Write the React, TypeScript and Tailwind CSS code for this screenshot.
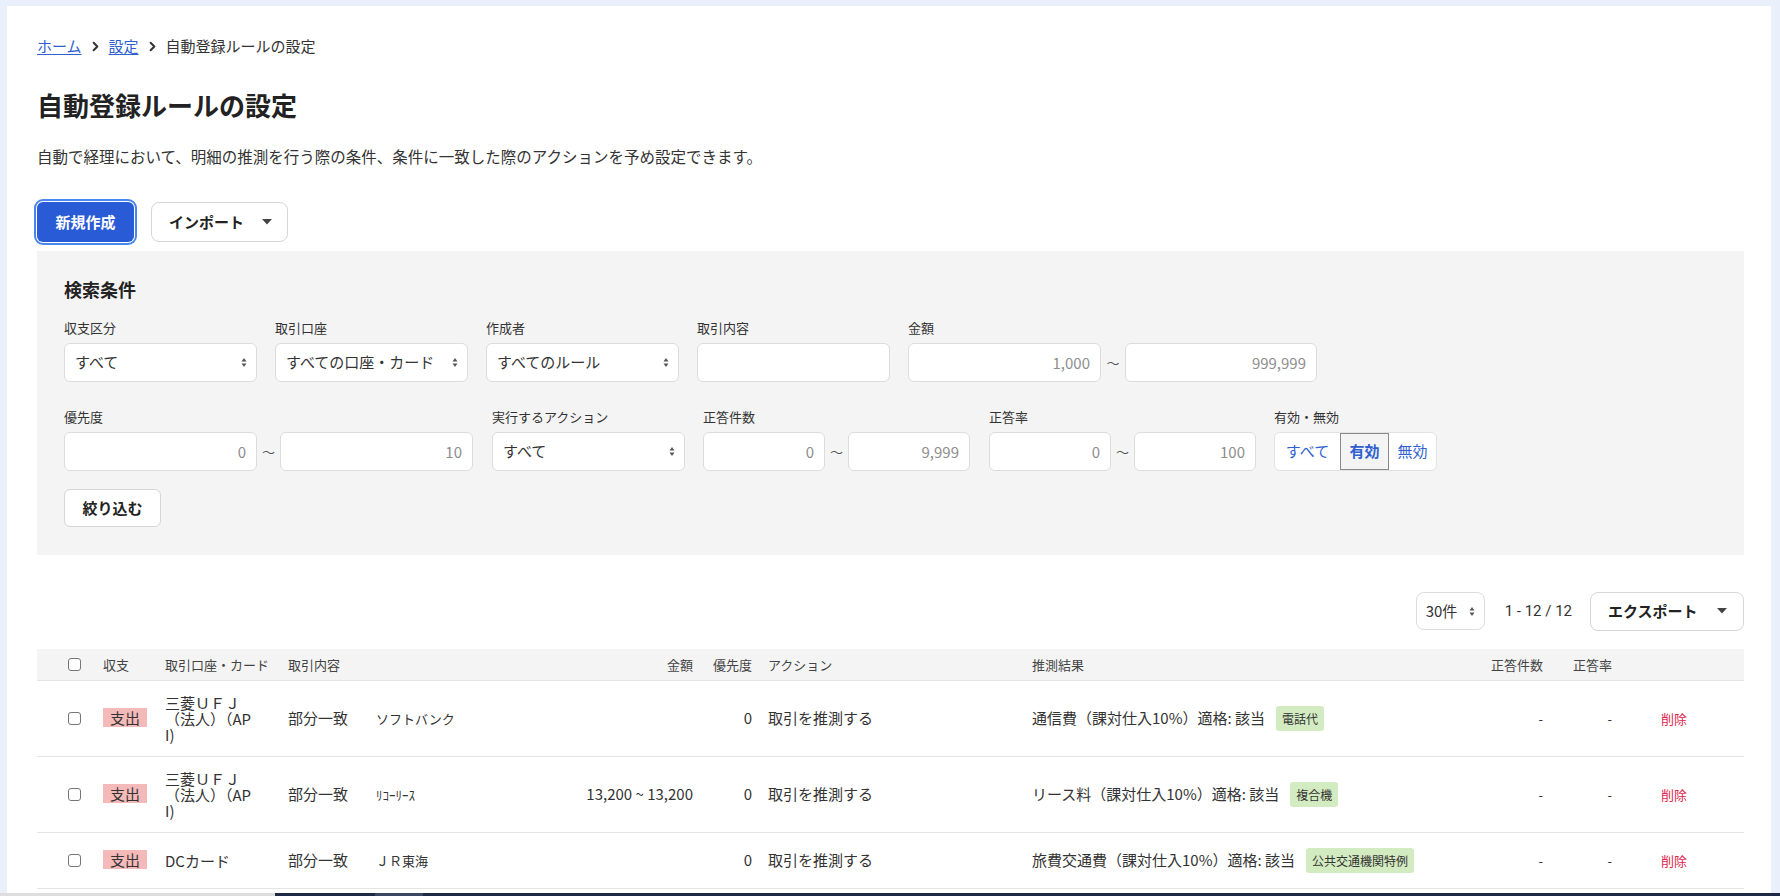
import React from "react";
import { ChevronRight } from "lucide-react";

const SelectArrows = () => (
  <svg width="6" height="11" viewBox="0 0 6 11" className="shrink-0">
    <path d="M3 1 L5.5 4.5 H0.5 Z" fill="#555" />
    <path d="M3 10 L5.5 6.5 H0.5 Z" fill="#555" />
  </svg>
);

const Caret = () => (
  <svg width="10" height="6" viewBox="0 0 10 6" className="shrink-0">
    <path d="M0 0 H10 L5 5.5 Z" fill="#444" />
  </svg>
);

const FakeSelect = ({ value, className = "w-[193px]" }: { value: string; className?: string }) => (
  <div
    className={`${className} h-[39px] bg-white border border-[#dcdcdc] rounded-[6px] flex items-center justify-between pl-[10px] pr-[9px] text-[15px] text-[#333]`}
  >
    <span className="truncate">{value}</span>
    <SelectArrows />
  </div>
);

const NumBox = ({ ph, className = "w-[193px]" }: { ph: string; className?: string }) => (
  <input
    readOnly
    placeholder={ph}
    className={`${className} h-[39px] bg-white border border-[#dcdcdc] rounded-[6px] text-right pr-[10px] text-[15px] placeholder:text-[#8e8e8e] outline-none`}
  />
);

const Tilde = ({ className = "w-[24px]" }: { className?: string }) => (
  <span className={`${className} text-center text-[13px] text-[#555]`}>～</span>
);

const Field = ({
  label,
  children,
  className = "",
}: {
  label: string;
  children: React.ReactNode;
  className?: string;
}) => (
  <div className={`flex flex-col ${className}`}>
    <div className="text-[13px] leading-[18px] text-[#333]">{label}</div>
    <div className="mt-[6px] flex items-center">{children}</div>
  </div>
);

const Checkbox = () => (
  <div className="w-[13px] h-[13px] rounded-[3px] border border-[#767676] bg-white" />
);

const cols =
  "grid grid-cols-[58px_62px_123px_88px_184px_149px_59px_264px_447px_80px_69px_124px]";

const rows = [
  {
    account: ["三菱ＵＦＪ", "（法人）（AP", "I)"],
    content: "ソフトバンク",
    amount: "",
    result: "通信費（課対仕入10%）適格: 該当",
    tag: "電話代",
    h: "h-[76px]",
  },
  {
    account: ["三菱ＵＦＪ", "（法人）（AP", "I)"],
    content: "ﾘｺｰﾘｰｽ",
    amount: "13,200 ~ 13,200",
    result: "リース料（課対仕入10%）適格: 該当",
    tag: "複合機",
    h: "h-[76px]",
  },
  {
    account: ["DCカード"],
    content: "ＪＲ東海",
    amount: "",
    result: "旅費交通費（課対仕入10%）適格: 該当",
    tag: "公共交通機関特例",
    h: "h-[56px]",
  },
];

export default function App() {
  return (
    <div className="h-[896px] overflow-hidden bg-[#e9f0fb] flex flex-col font-['Noto_Sans_CJK_JP','Noto_Sans',sans-serif] text-[#333]">
      <div className="flex-1 min-h-0 pt-[6px] pl-[7px] pr-[9px] flex">
        <div className="flex-1 bg-white pl-[30px] pr-[27px] pt-[29px] overflow-hidden">
          {/* breadcrumb */}
          <nav className="flex items-center text-[15px] leading-[22px]">
            <a className="text-[#2f5fd0] underline underline-offset-2">ホーム</a>
            <ChevronRight size={15} strokeWidth={3.2} className="mx-[6px] text-[#333]" />
            <a className="text-[#2f5fd0] underline underline-offset-2">設定</a>
            <ChevronRight size={15} strokeWidth={3.2} className="mx-[6px] text-[#333]" />
            <span>自動登録ルールの設定</span>
          </nav>

          <h1 className="mt-[30px] text-[26px] leading-[36px] font-bold text-[#222]">
            自動登録ルールの設定
          </h1>
          <p className="mt-[22px] text-[15.5px] leading-[22px]">
            自動で経理において、明細の推測を行う際の条件、条件に一致した際のアクションを予め設定できます。
          </p>

          <div className="mt-[35px] flex items-center gap-[17px]">
            <button className="w-[97px] h-[40px] rounded-[6px] bg-[#2a5bd7] text-white text-[15px] font-bold ring-2 ring-[#4a86f0] ring-offset-1 ring-offset-white">
              新規作成
            </button>
            <button className="w-[137px] h-[40px] rounded-[8px] bg-white border border-[#d6d6d6] flex items-center justify-between pl-[17px] pr-[15px] text-[15px] font-bold text-[#222]">
              インポート
              <Caret />
            </button>
          </div>

          {/* search panel */}
          <section className="mt-[9px] bg-[#f5f4f5] pl-[27px] pt-[25px] pb-[28px]">
            <h2 className="text-[18px] leading-[26px] font-bold text-[#222]">検索条件</h2>
            <div className="mt-[17px] flex gap-[18px]">
              <Field label="収支区分">
                <FakeSelect value="すべて" />
              </Field>
              <Field label="取引口座">
                <FakeSelect value="すべての口座・カード" />
              </Field>
              <Field label="作成者">
                <FakeSelect value="すべてのルール" />
              </Field>
              <Field label="取引内容">
                <NumBox ph="" />
              </Field>
              <Field label="金額">
                <NumBox ph="1,000" />
                <Tilde />
                <NumBox ph="999,999" className="w-[192px]" />
              </Field>
            </div>

            <div className="mt-[26px] flex">
              <Field label="優先度">
                <NumBox ph="0" />
                <Tilde className="w-[23px]" />
                <NumBox ph="10" />
              </Field>
              <Field label="実行するアクション" className="ml-[19px]">
                <FakeSelect value="すべて" />
              </Field>
              <Field label="正答件数" className="ml-[18px]">
                <NumBox ph="0" className="w-[122px]" />
                <Tilde className="w-[23px]" />
                <NumBox ph="9,999" className="w-[122px]" />
              </Field>
              <Field label="正答率" className="ml-[19px]">
                <NumBox ph="0" className="w-[122px]" />
                <Tilde className="w-[23px]" />
                <NumBox ph="100" className="w-[122px]" />
              </Field>
              <Field label="有効・無効" className="ml-[18px]">
                <div className="flex h-[39px] w-[163px] rounded-[6px] border border-[#e2e2e2] bg-white text-[15px] text-[#2f5fd0] overflow-hidden">
                  <div className="w-[65px] flex items-center justify-center">すべて</div>
                  <div className="w-[49px] flex items-center justify-center border border-[#8a8a8a] bg-[#f5f4f5] font-bold">
                    有効
                  </div>
                  <div className="flex-1 flex items-center justify-center">無効</div>
                </div>
              </Field>
            </div>

            <button className="mt-[18px] w-[97px] h-[38px] rounded-[6px] bg-white border border-[#d6d6d6] text-[15px] font-bold text-[#222]">
              絞り込む
            </button>
          </section>

          {/* pagination */}
          <div className="mt-[36px] h-[40px] flex items-center justify-end">
            <div className="w-[69px] h-[38px] bg-white border border-[#dcdcdc] rounded-[8px] flex items-center justify-between pl-[9px] pr-[9px] text-[15px]">
              <span>30件</span>
              <SelectArrows />
            </div>
            <span className="ml-[20px] text-[15px] font-['Roboto','Noto_Sans_CJK_JP',sans-serif]">1 - 12 / 12</span>
            <button className="ml-[18px] w-[154px] h-[39px] rounded-[8px] bg-white border border-[#d6d6d6] flex items-center justify-between pl-[17px] pr-[16px] text-[15px] font-bold text-[#222]">
              エクスポート
              <Caret />
            </button>
          </div>

          {/* table */}
          <div className="mt-[18px]">
            <div className={`${cols} h-[32px] items-center bg-[#f5f4f5] border-b border-[#e4e4e4] text-[13px] text-[#444]`}>
              <div className="pl-[31px]">
                <Checkbox />
              </div>
              <div className="pl-[8px]">収支</div>
              <div className="pl-[8px]">取引口座・カード</div>
              <div className="pl-[8px]">取引内容</div>
              <div />
              <div className="pr-[8px] text-right">金額</div>
              <div className="pr-[8px] text-right">優先度</div>
              <div className="pl-[8px]">アクション</div>
              <div className="pl-[8px]">推測結果</div>
              <div className="pr-[8px] text-right">正答件数</div>
              <div className="pr-[8px] text-right">正答率</div>
              <div />
            </div>

            {rows.map((r, i) => (
              <div key={i} className={`${cols} ${r.h} items-center border-b border-[#e4e4e4] text-[15px]`}>
                <div className="pl-[31px]">
                  <Checkbox />
                </div>
                <div className="pl-[8px]">
                  <span className="inline-block h-[19px] leading-[19px] px-[7px] bg-[#f4b9b9] text-[#333]">支出</span>
                </div>
                <div className="pl-[8px] leading-[16px]">
                  {r.account.map((l, j) => (
                    <div key={j}>{l}</div>
                  ))}
                </div>
                <div className="pl-[8px]">部分一致</div>
                <div className="pl-[8px] text-[13px]">{r.content}</div>
                <div className="pr-[8px] text-right">{r.amount}</div>
                <div className="pr-[8px] text-right">0</div>
                <div className="pl-[8px]">取引を推測する</div>
                <div className="pl-[8px] flex items-center">
                  <span>{r.result}</span>
                  <span className="ml-[11px] h-[25px] leading-[25px] px-[6px] rounded-[3px] bg-[#d3ebc1] text-[12px] text-[#333]">
                    {r.tag}
                  </span>
                </div>
                <div className="pr-[8px] text-right text-[13px]">-</div>
                <div className="pr-[8px] text-right text-[13px]">-</div>
                <div className="pl-[41px] text-[13px] text-[#e0244c]">削除</div>
              </div>
            ))}
          </div>
        </div>
      </div>
      <div className="h-[3px] flex shrink-0">
        <div className="w-[275px] bg-[#dedede]" />
        <div className="w-[100px] bg-[#1e2946]" />
        <div className="w-[48px] bg-[#3b4662]" />
        <div className="flex-1 bg-[#1e2946]" />
      </div>
    </div>
  );
}
